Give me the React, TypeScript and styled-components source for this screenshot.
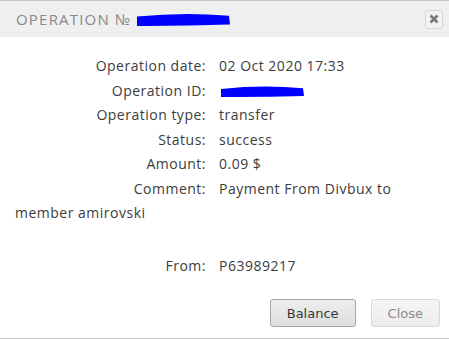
import React from "react";
import styled, { createGlobalStyle } from "styled-components";

const Global = createGlobalStyle`
  html, body { margin: 0; padding: 0; background: #fff; }
  body { width: 449px; height: 339px; overflow: hidden; }
`;

const Dialog = styled.div`
  width: 449px;
  height: 339px;
  box-sizing: border-box;
  border-top: 1px solid #c8c8c8;
  border-bottom: 1px solid #c8c8c8;
  display: flex;
  flex-direction: column;
  background: #fff;
  font-family: "Open Sans", sans-serif;
`;

const Header = styled.div`
  height: 36px;
  background: #efefef;
  display: flex;
  align-items: center;
  padding: 0 6px 0 16px;
`;

const Title = styled.div`
  font-family: "Open Sans", sans-serif;
  font-size: 15px;
  letter-spacing: 1.2px;
  color: #888;
  text-transform: uppercase;
  display: flex;
  align-items: center;
  gap: 3px;
  flex: 1;
`;

const CloseX = styled.button`
  width: 18px;
  height: 19px;
  border: 1px solid #d6d6d6;
  border-radius: 3px;
  background: #f2f2f2;
  padding: 0;
  display: flex;
  align-items: center;
  justify-content: center;
`;

const Body = styled.div`
  flex: 1;
  padding: 17px 15px 0 15px;
  font-size: 14px;
  letter-spacing: 0.5px;
  line-height: 24.5px;
  color: #3c3c3c;
`;

const Row = styled.div<{ $gap?: number }>`
  margin-top: ${(p) => p.$gap ?? 0}px;
`;

const IdRow = styled.div`
  display: flex;
  align-items: center;
  height: 24.5px;
`;

const Label = styled.span`
  display: inline-block;
  width: 191px;
  text-align: right;
  margin-right: 13px;
`;

const Footer = styled.div`
  display: flex;
  justify-content: flex-end;
  gap: 15px;
  padding: 0 9px 11px 0;
`;

const Button = styled.button<{ $disabled?: boolean }>`
  height: 28px;
  padding: 0 16px;
  font-family: "DejaVu Sans", Verdana, sans-serif;
  font-size: 13px;
  font-weight: 400;
  border-radius: 3px;
  border: 1px solid ${(p) => (p.$disabled ? "#d8d8d8" : "#a6a6a6")};
  color: ${(p) => (p.$disabled ? "#8a8a8a" : "#383838")};
  background: ${(p) =>
    p.$disabled
      ? "linear-gradient(#f6f6f6, #ececec)"
      : "linear-gradient(#eeeeee, #dedede)"};
`;

const Scribble = ({ w, h }: { w: number; h: number }) => (
  <svg width={w} height={h} viewBox={`0 0 ${w} ${h}`} style={{ display: "block" }}>
    <path
      d={`M2 ${h * 0.35} Q ${w * 0.5} ${h * 0.05} ${w - 3} ${h * 0.3} L ${w - 2} ${h * 0.85} Q ${w * 0.5} ${h * 0.95} 2 ${h - 1} Z`}
      fill="#0000ff"
    />
  </svg>
);

export default function App() {
  return (
    <>
      <Global />
      <Dialog>
        <Header>
          <Title>
            Operation №
            <Scribble w={97} h={16} />
          </Title>
          <CloseX>
            <svg width="10" height="10" viewBox="0 0 10 10">
              <path d="M1.5 1.5 L8.5 8.5 M8.5 1.5 L1.5 8.5" stroke="#777" strokeWidth="2.6" />
            </svg>
          </CloseX>
        </Header>
        <Body>
          <Row><Label>Operation date:</Label>02 Oct 2020 17:33</Row>
          <IdRow>
            <Label>Operation ID:</Label>
            <Scribble w={87} h={14} />
          </IdRow>
          <Row><Label>Operation type:</Label>transfer</Row>
          <Row><Label>Status:</Label>success</Row>
          <Row><Label>Amount:</Label>0.09 $</Row>
          <Row><Label>Comment:</Label>Payment From Divbux to member amirovski</Row>
          <Row $gap={28}><Label>From:</Label>P63989217</Row>
        </Body>
        <Footer>
          <Button>Balance</Button>
          <Button $disabled>Close</Button>
        </Footer>
      </Dialog>
    </>
  );
}
